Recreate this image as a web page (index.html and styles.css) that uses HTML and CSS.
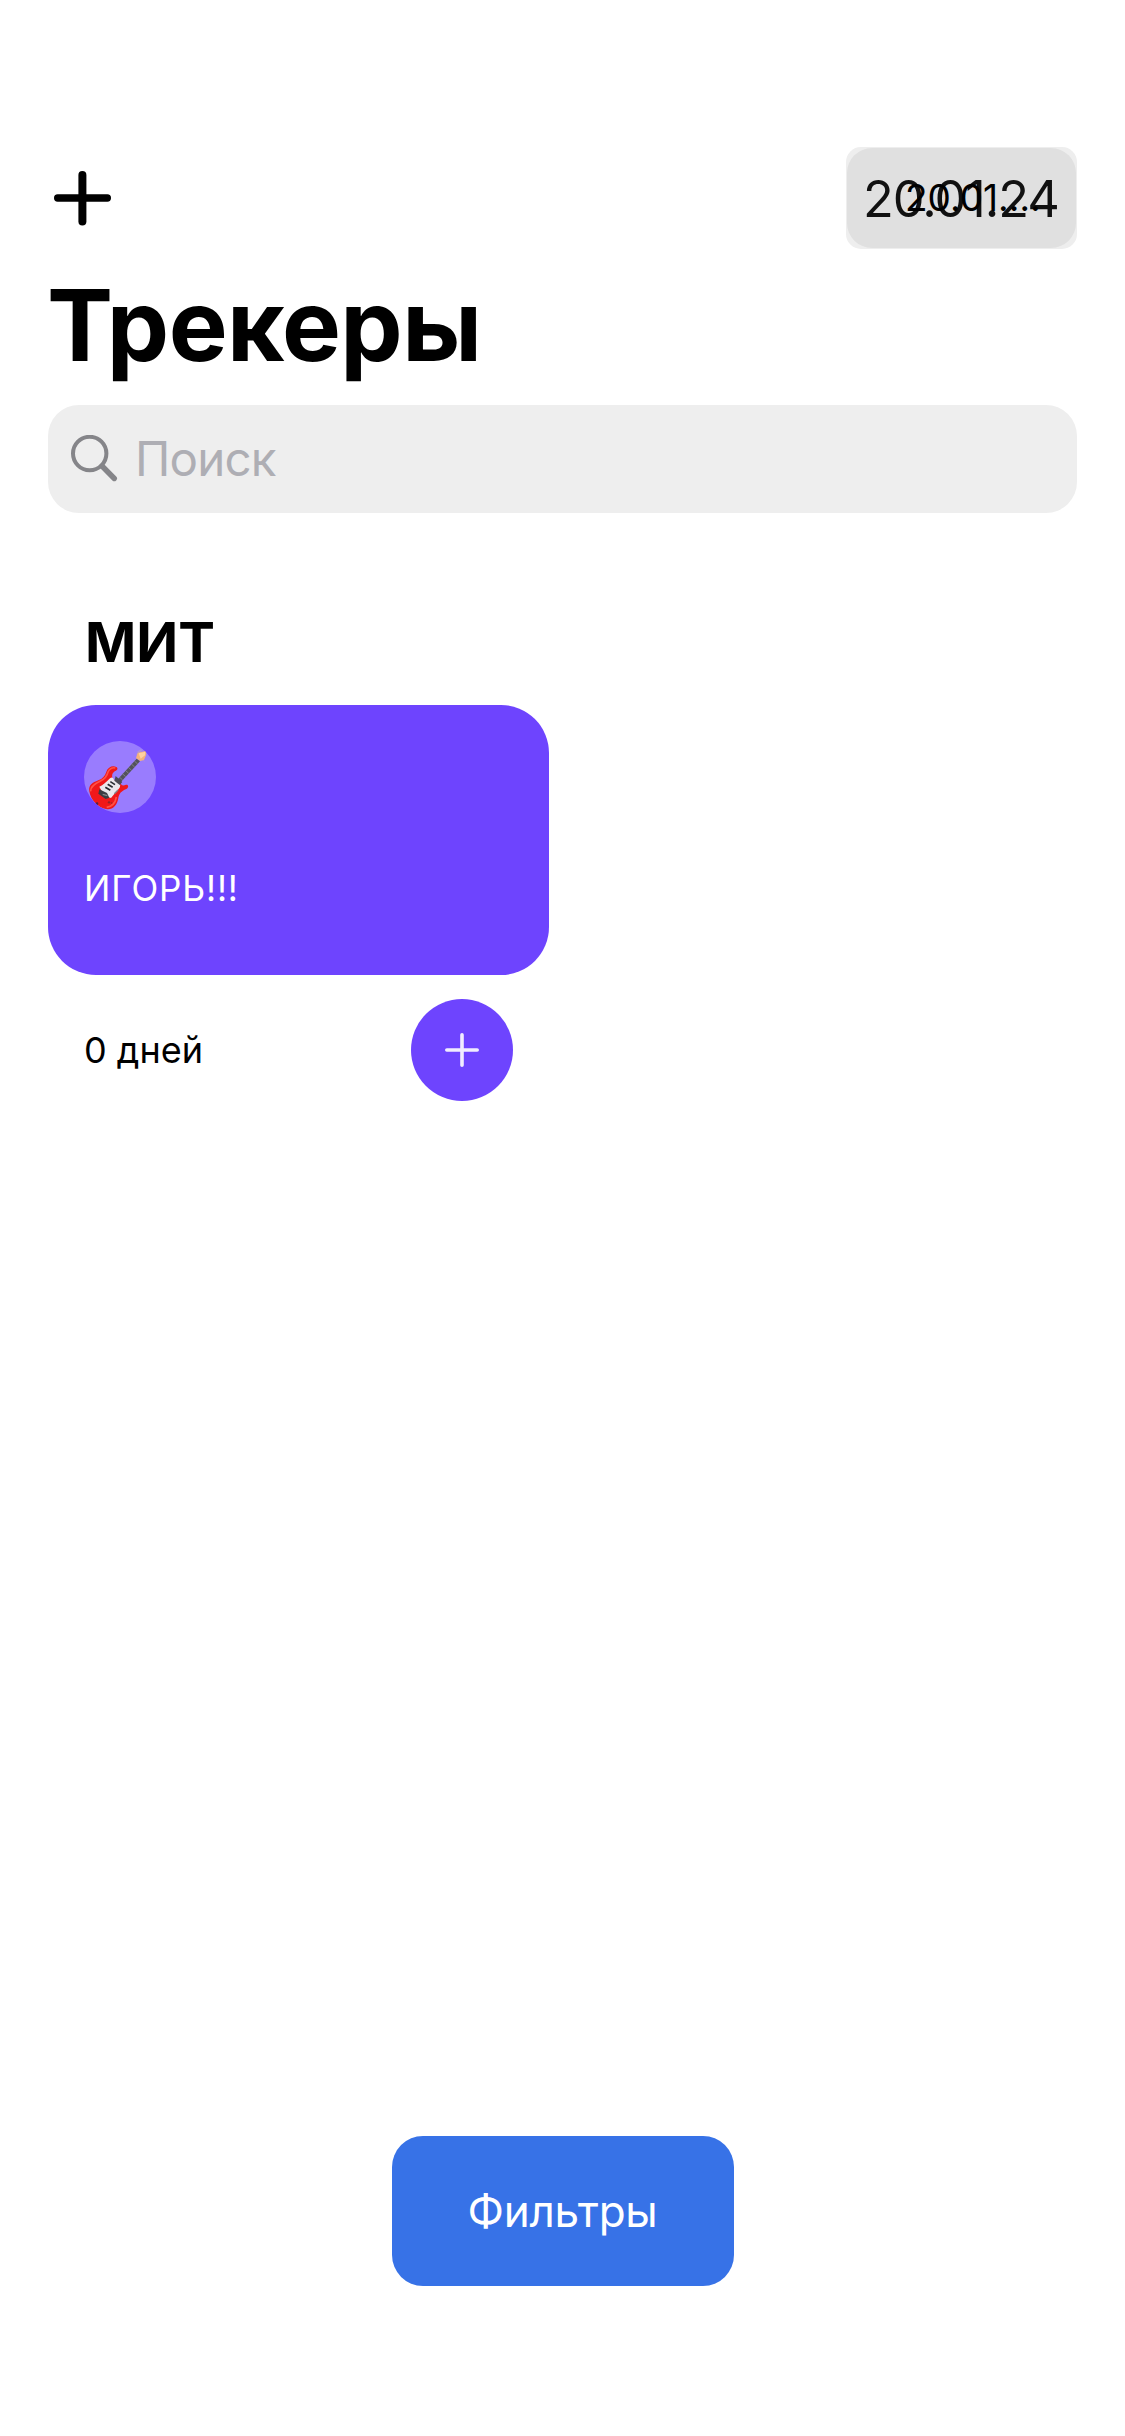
FILE: index.html
```html
<!DOCTYPE html>
<html lang="ru">
<head>
<meta charset="utf-8">
<title>Трекеры</title>
<link rel="stylesheet" href="styles.css">
</head>
<body>
<main class="screen">
  <header class="navbar">
    <button class="add" aria-label="Добавить">
      <svg width="57" height="55" viewBox="0 0 57 55" stroke="#000" stroke-linecap="round"><path d="M3.7 27H53.3" stroke-width="7.4"/><path d="M28.4 4V50.5" stroke-width="8"/></svg>
    </button>
    <div class="date">
      <span class="date-value">20.01.24</span>
      <span class="date-compact">20.01.…</span>
    </div>
  </header>
  <h1 class="title">Трекеры</h1>
  <div class="search">
    <svg class="search-icon" width="48" height="48" viewBox="0 0 48 48" fill="none" stroke="#858589" stroke-linecap="round"><circle cx="18.7" cy="18.5" r="16.7" stroke-width="4"/><path d="M31 31L43.3 43.5" stroke-width="5.4"/></svg>
    <span class="placeholder">Поиск</span>
  </div>
  <section class="category">
    <h2 class="category-title">МИТ</h2>
    <article class="tracker">
      <div class="card">
        <div class="emoji">
          <svg width="72" height="72" viewBox="0 0 216 216">
            <path d="M100 116L158 53L168 61L110 124Z" fill="#53535b"/>
            <path d="M106 108l10 9M115 98l10 9M124 88l10 9M133 79l10 9M142 69l10 9M151 60l10 9" stroke="#98969d" stroke-width="2"/>
            <path d="M156 51L161 35L184 30Q189 36 186 43L180 57L169 60Z" fill="#f4b27a"/>
            <path d="M164 37L184 32L183 43L170 53Z" fill="#ffd2a0"/>
            <path d="M158 39L175 27M160 33L172 26M178 58l3 3" stroke="#c2a6b5" stroke-width="2"/>
            <path d="M16 151C13 132 25 125 43 118C56 113 63 105 67 92C72 77 87 72 97 78C104 83 99 88 92 91C83 98 83 107 87 115L110 127C114 137 120 133 126 131C134 130 135 139 127 144C111 151 106 157 103 171C100 193 85 208 66 204C43 201 20 178 16 151Z" fill="#f0181a"/>
            <path d="M20 151C19 136 33 128 48 121C61 115 69 107 72 93C77 81 88 79 94 81M97 168C94 187 82 197 68 199" fill="none" stroke="#ff5146" stroke-width="5"/>
            <path d="M46 137C58 132 66 124 78 112Q86 106 90 116L108 128C110 136 107 142 99 149L81 171Q60 168 46 137Z" fill="#ebe7ec"/>
            <path d="M95 105L115 123L107 132L91 119Z" fill="#4d4c55"/>
            <path d="M64 139l15 9M71 130l15 9M79 122l14 9" stroke="#292b31" stroke-width="5"/>
            <path d="M46 145L69 156L76 170L65 174L43 158Z" fill="#3b3b42"/>
            <path d="M56 160l14 4M91 158l11-11" stroke="#85858b" stroke-width="4"/>
            <circle cx="75" cy="184" r="3.5" fill="#8f2429"/><circle cx="39" cy="188" r="4" fill="#542348"/><circle cx="83" cy="186" r="2" fill="#8f2429"/>
          </svg>
        </div>
        <p class="name">ИГОРЬ!!!</p>
      </div>
      <div class="tracker-footer">
        <span class="days">0 дней</span>
        <button class="complete" aria-label="Отметить">
          <svg width="34" height="34" viewBox="0 0 34 34" stroke="#fff" stroke-opacity=".9" stroke-width="3.6" stroke-linecap="round"><path d="M1.8 17H32.2M17 1.8V32.2"/></svg>
        </button>
      </div>
    </article>
  </section>
  <button class="filters"><span>Фильтры</span></button>
</main>
</body>
</html>
```
FILE: styles.css
```css
* { box-sizing: border-box; }
body { margin: 0; background: #fff; color: #000; font-family: Inter, "Noto Sans", sans-serif; }
button { border: 0; padding: 0; background: none; font: inherit; }
h1, h2, p { margin: 0; }
svg { display: block; }
.screen { width: 1125px; height: 2436px; padding: 147px 48px 150px; display: flex; flex-direction: column; }
.navbar { height: 102px; display: flex; justify-content: space-between; align-items: center; padding-left: 6px; }
.date { position: relative; width: 231px; height: 102px; border-radius: 15px; background: #eee; }
.date::before { content: ""; position: absolute; inset: 1px; border-radius: 25px; background: #e0e0e0; }
.date-value, .date-compact { position: absolute; white-space: nowrap; line-height: 60px; }
.date-value { left: 17px; top: 22px; font-size: 50.5px; letter-spacing: -1.05px; color: #111; }
.date-compact { left: 59px; top: 21px; font-size: 37px; letter-spacing: 0; }
.title { height: 120px; margin-top: 15px; padding-top: 1px; font-size: 99px; line-height: 120px; font-weight: 700; letter-spacing: -0.6px; text-indent: -1px; }
.search { height: 108px; margin-top: 21px; padding-left: 23px; display: flex; align-items: center; border-radius: 31px; background: #eee; }
.placeholder { margin-left: 16px; font-size: 47.5px; line-height: 60px; letter-spacing: -0.8px; color: #aeaeb4; }
.category { margin-top: 108px; }
.category-title { height: 84px; padding-left: 37px; font-size: 55px; line-height: 42px; font-weight: 700; }
.tracker { width: 501px; }
.card { height: 270px; padding: 36px; border-radius: 48px; background: #6e44fe; }
.emoji { width: 72px; height: 72px; border-radius: 50%; overflow: hidden; background: rgba(255, 255, 255, 0.3); }
.name { margin-top: 48px; font-size: 35px; line-height: 54px; letter-spacing: 0.9px; color: #fff; }
.tracker-footer { height: 126px; padding: 24px 36px 0; display: flex; justify-content: space-between; align-items: center; }
.days { font-size: 36px; line-height: 48px; }
.complete { width: 102px; height: 102px; border-radius: 50%; background: #6e44fe; display: grid; place-items: center; }
.filters { width: 342px; height: 150px; margin: auto auto 0; border-radius: 31px; background: #3772e7; color: #fff; font-size: 44px; line-height: 54px; letter-spacing: -0.3px; }
```
